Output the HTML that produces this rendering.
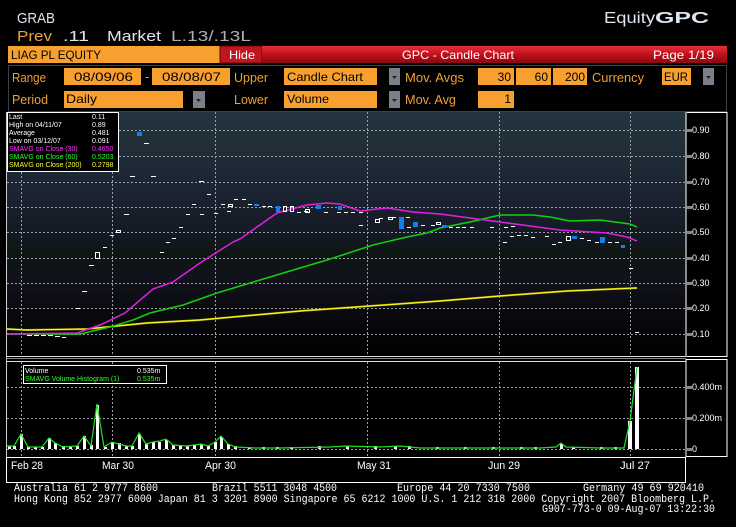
<!DOCTYPE html>
<html><head><meta charset="utf-8"><style>
html,body{margin:0;padding:0;background:#000;}
svg{display:block}
text{font-family:"Liberation Sans",sans-serif;}
.m{font-family:"Liberation Mono",monospace;}
</style></head><body>
<svg width="736" height="527" viewBox="0 0 736 527" xmlns="http://www.w3.org/2000/svg">
<defs>
<linearGradient id="bg" x1="0" y1="0" x2="0" y2="1">
<stop offset="0" stop-color="#24343e"/>
<stop offset="0.2" stop-color="#1f2c36"/>
<stop offset="0.35" stop-color="#1a2230"/>
<stop offset="0.5" stop-color="#141a24"/>
<stop offset="0.58" stop-color="#0e1612"/>
<stop offset="0.68" stop-color="#11121d"/>
<stop offset="0.8" stop-color="#0b0c10"/>
<stop offset="0.9" stop-color="#050507"/>
<stop offset="1" stop-color="#000"/>
</linearGradient>
<linearGradient id="red" x1="0" y1="0" x2="0" y2="1">
<stop offset="0" stop-color="#e8303a"/>
<stop offset="0.5" stop-color="#c0101c"/>
<stop offset="1" stop-color="#8a0810"/>
</linearGradient>
</defs>
<rect width="736" height="527" fill="#000"/>
<!-- header -->
<text x="17" y="23" font-size="15" fill="#dde6f0" textLength="38" lengthAdjust="spacingAndGlyphs">GRAB</text>
<text x="604" y="23" font-size="16" fill="#dde6f0" textLength="51" lengthAdjust="spacingAndGlyphs">Equity</text>
<text x="655" y="23" font-size="16" font-weight="bold" fill="#dde6f0" textLength="54" lengthAdjust="spacingAndGlyphs">GPC</text>
<text x="17" y="41" font-size="15" fill="#e8a040" textLength="35" lengthAdjust="spacingAndGlyphs">Prev</text>
<text x="63" y="41" font-size="15" fill="#dde6f0" textLength="26" lengthAdjust="spacingAndGlyphs">.11</text>
<text x="107" y="41" font-size="15" fill="#dde6f0" textLength="54" lengthAdjust="spacingAndGlyphs">Market</text>
<text x="171" y="41" font-size="15" fill="#aab0b8" textLength="80" lengthAdjust="spacingAndGlyphs">L.13/.13L</text>
<!-- red bar -->
<rect x="8" y="46" width="212" height="17" fill="#f7a030"/>
<text x="11" y="59" font-size="12" fill="#000" textLength="90" lengthAdjust="spacingAndGlyphs">LIAG PL EQUITY</text>
<rect x="220" y="46" width="42" height="17" fill="#c01620" stroke="#600" stroke-width="1"/>
<text x="229" y="59" font-size="12" fill="#fff" textLength="26" lengthAdjust="spacingAndGlyphs">Hide</text>
<rect x="262" y="46" width="465" height="17" fill="url(#red)"/>
<text x="402" y="59" font-size="12" fill="#fff" textLength="112" lengthAdjust="spacingAndGlyphs">GPC - Candle Chart</text>
<text x="653" y="59" font-size="12" fill="#fff" textLength="61" lengthAdjust="spacingAndGlyphs">Page 1/19</text>
<!-- form -->
<rect x="8.5" y="65.5" width="718" height="46" fill="#000" stroke="#3a4048"/>
<g font-size="13" fill="#f0a030">
<text x="12" y="82" textLength="34" lengthAdjust="spacingAndGlyphs">Range</text>
<text x="145" y="81" fill="#f0a030">-</text>
<text x="234" y="82" textLength="34" lengthAdjust="spacingAndGlyphs">Upper</text>
<text x="405" y="82" textLength="59" lengthAdjust="spacingAndGlyphs">Mov. Avgs</text>
<text x="592" y="82" textLength="52" lengthAdjust="spacingAndGlyphs">Currency</text>
<text x="12" y="104" textLength="36" lengthAdjust="spacingAndGlyphs">Period</text>
<text x="234" y="104" textLength="34" lengthAdjust="spacingAndGlyphs">Lower</text>
<text x="405" y="104" textLength="51" lengthAdjust="spacingAndGlyphs">Mov. Avg</text>
</g>
<g fill="#f7a030">
<rect x="64" y="68" width="77" height="17"/><rect x="152" y="68" width="78" height="17"/>
<rect x="284" y="68" width="93" height="17"/>
<rect x="478" y="68" width="36" height="17"/><rect x="516" y="68" width="35" height="17"/><rect x="553" y="68" width="34" height="17"/>
<rect x="662" y="68" width="29" height="17"/>
<rect x="64" y="91" width="119" height="17"/><rect x="284" y="91" width="93" height="17"/><rect x="478" y="91" width="36" height="17"/>
</g>
<g fill="#7a7f88">
<rect x="389" y="68" width="11" height="17"/><rect x="703" y="68" width="11" height="17"/>
<rect x="193" y="91" width="12" height="17"/><rect x="389" y="91" width="11" height="17"/>
</g>
<g fill="#222"><path d="M392 76h5l-2.5 3z"/><path d="M706 76h5l-2.5 3z"/><path d="M196 99h5l-2.5 3z"/><path d="M392 99h5l-2.5 3z"/></g>
<g font-size="12" fill="#000">
<text x="74" y="81" textLength="59" lengthAdjust="spacingAndGlyphs">08/09/06</text>
<text x="162" y="81" textLength="59" lengthAdjust="spacingAndGlyphs">08/08/07</text>
<text x="287" y="81" textLength="76" lengthAdjust="spacingAndGlyphs">Candle Chart</text>
<text x="511" y="81" text-anchor="end">30</text>
<text x="548" y="81" text-anchor="end">60</text>
<text x="585" y="81" text-anchor="end">200</text>
<text x="664" y="81" textLength="24" lengthAdjust="spacingAndGlyphs">EUR</text>
<text x="66" y="103" textLength="31" lengthAdjust="spacingAndGlyphs">Daily</text>
<text x="287" y="103" textLength="42" lengthAdjust="spacingAndGlyphs">Volume</text>
<text x="511" y="103" text-anchor="end">1</text>
</g>
<!-- upper chart -->
<rect x="6" y="112" width="680" height="244" fill="url(#bg)"/>
<line x1="6.5" y1="112" x2="6.5" y2="483" stroke="#ccc"/>
<g stroke="#9aa0a8" stroke-dasharray="2,2" stroke-width="1">
<line x1="7" y1="130.5" x2="686" y2="130.5"/><line x1="7" y1="156.5" x2="686" y2="156.5"/><line x1="7" y1="182.5" x2="686" y2="182.5"/><line x1="7" y1="207.5" x2="686" y2="207.5"/><line x1="7" y1="232.5" x2="686" y2="232.5"/><line x1="7" y1="258.5" x2="686" y2="258.5"/><line x1="7" y1="283.5" x2="686" y2="283.5"/><line x1="7" y1="308.5" x2="686" y2="308.5"/><line x1="7" y1="334.5" x2="686" y2="334.5"/>
<line x1="21.5" y1="112" x2="21.5" y2="356"/><line x1="112.5" y1="112" x2="112.5" y2="356"/><line x1="215.5" y1="112" x2="215.5" y2="356"/><line x1="367.5" y1="112" x2="367.5" y2="356"/><line x1="499.5" y1="112" x2="499.5" y2="356"/><line x1="630.5" y1="112" x2="630.5" y2="356"/>
</g>
<rect x="686" y="112.5" width="41" height="244" fill="#000" stroke="#fff"/>
<line x1="686.5" y1="112" x2="686.5" y2="357" stroke="#888"/>
<g fill="#888"><rect x="686" y="129" width="6" height="3"/><rect x="686" y="155" width="6" height="3"/><rect x="686" y="181" width="6" height="3"/><rect x="686" y="206" width="6" height="3"/><rect x="686" y="231" width="6" height="3"/><rect x="686" y="257" width="6" height="3"/><rect x="686" y="282" width="6" height="3"/><rect x="686" y="307" width="6" height="3"/><rect x="686" y="333" width="6" height="3"/></g>
<g font-size="9" fill="#fff">
<text x="692" y="133">0.90</text><text x="692" y="159">0.80</text><text x="692" y="185">0.70</text><text x="692" y="210">0.60</text><text x="692" y="235">0.50</text><text x="692" y="261">0.40</text><text x="692" y="286">0.30</text><text x="692" y="311">0.20</text><text x="692" y="337">0.10</text>
</g>
<!-- MAs -->
<polyline fill="none" stroke="#b0a000" stroke-width="2" points="7,329 27,330 87,329 147,323 200,320 300,311 440,301 500,296 567,291 637,288"/>
<polyline fill="none" stroke="#ffff20" stroke-width="1" points="7,329 27,330 87,329 147,323 200,320 300,311 440,301 500,296 567,291 637,288"/>
<polyline fill="none" stroke="#10d010" stroke-width="1.5" points="7,334 80,334 110,327 133,320 150,313 183,305 217,293 250,283 300,268 327,260 373,245 407,237 427,233 440,228 470,222 500,215 533,215 550,217 570,221 600,220 630,224 637,227"/>
<polyline fill="none" stroke="#e020e0" stroke-width="1.5" points="7,334 77,333 100,325 125,313 153,289 173,282 200,263 233,242 240,239 257,227 277,213 307,205 327,203 340,204 360,211 387,208 413,212 440,214 500,222 560,230 607,233 627,237 637,241"/>
<!-- candles -->
<g fill="#fff">
<rect x="27" y="335" width="5" height="1"/><rect x="34" y="335" width="5" height="1"/><rect x="41" y="335" width="5" height="1"/><rect x="48" y="335" width="5" height="1"/><rect x="55" y="336" width="5" height="1"/><rect x="62" y="337" width="4" height="1"/>
<rect x="76" y="308" width="4" height="1"/><rect x="82" y="291" width="5" height="1"/><rect x="89" y="265" width="5" height="1"/><rect x="103" y="247" width="4" height="1"/><rect x="110" y="235" width="4" height="1"/>
<rect x="124" y="214" width="5" height="1"/><rect x="130" y="176" width="5" height="1"/><rect x="151" y="176" width="5" height="1"/><rect x="144" y="143" width="5" height="1"/>
<rect x="160" y="252" width="4" height="1"/><rect x="166" y="242" width="4" height="1"/><rect x="172" y="238" width="4" height="1"/><rect x="179" y="227" width="4" height="1"/><rect x="186" y="214" width="4" height="1"/><rect x="192" y="204" width="4" height="1"/><rect x="199" y="181" width="5" height="1"/><rect x="207" y="194" width="4" height="1"/><rect x="200" y="214" width="4" height="1"/><rect x="214" y="213" width="4" height="1"/><rect x="221" y="204" width="4" height="1"/><rect x="227" y="211" width="4" height="1"/><rect x="234" y="199" width="4" height="1"/><rect x="242" y="199" width="4" height="1"/><rect x="248" y="204" width="4" height="1"/><rect x="262" y="206" width="4" height="1"/><rect x="268" y="206" width="4" height="1"/><rect x="297" y="212" width="4" height="1"/><rect x="304" y="211" width="4" height="1"/><rect x="324" y="212" width="4" height="1"/><rect x="337" y="212" width="4" height="1"/><rect x="344" y="212" width="4" height="1"/><rect x="351" y="212" width="4" height="1"/><rect x="359" y="212" width="4" height="1"/>
<rect x="359" y="225" width="4" height="1"/><rect x="379" y="218" width="4" height="1"/><rect x="392" y="217" width="4" height="1"/><rect x="399" y="217" width="4" height="1"/><rect x="406" y="217" width="4" height="1"/><rect x="407" y="227" width="4" height="1"/><rect x="421" y="225" width="4" height="1"/><rect x="431" y="225" width="4" height="1"/><rect x="449" y="227" width="4" height="1"/><rect x="456" y="227" width="4" height="1"/><rect x="462" y="227" width="4" height="1"/><rect x="470" y="227" width="4" height="1"/><rect x="490" y="227" width="4" height="1"/>
<rect x="504" y="227" width="4" height="1"/><rect x="511" y="226" width="4" height="1"/><rect x="503" y="242" width="4" height="1"/><rect x="510" y="236" width="4" height="1"/><rect x="517" y="235" width="4" height="1"/><rect x="524" y="235" width="4" height="1"/><rect x="531" y="237" width="4" height="1"/><rect x="545" y="236" width="4" height="1"/><rect x="552" y="244" width="4" height="1"/><rect x="558" y="242" width="4" height="1"/><rect x="580" y="238" width="4" height="1"/><rect x="587" y="240" width="4" height="1"/><rect x="595" y="242" width="4" height="1"/><rect x="608" y="242" width="4" height="1"/><rect x="615" y="242" width="4" height="1"/><rect x="629" y="268" width="4" height="1"/><rect x="635" y="332" width="4" height="1"/>
</g>
<g fill="none" stroke="#fff" stroke-width="1">
<rect x="95.5" y="252.5" width="4" height="6"/><rect x="116.5" y="230.5" width="4" height="2"/><rect x="228.5" y="204.5" width="4" height="2"/>
<rect x="283.5" y="206.5" width="3" height="5"/><rect x="290.5" y="206.5" width="3" height="5"/><rect x="305.5" y="209.5" width="4" height="3"/>
<rect x="375.5" y="219.5" width="4" height="3"/><rect x="388.5" y="217.5" width="4" height="2"/><rect x="436.5" y="222.5" width="4" height="2"/><rect x="566.5" y="236.5" width="4" height="4"/>
</g>
<g fill="#1080f0">
<rect x="137" y="132" width="5" height="4"/><rect x="254" y="204" width="5" height="2"/><rect x="276" y="206" width="4" height="6"/><rect x="316" y="205" width="5" height="4"/><rect x="338" y="206" width="4" height="4"/><rect x="399" y="217" width="5" height="12"/><rect x="413" y="222" width="5" height="5"/><rect x="442" y="225" width="5" height="2"/><rect x="572" y="236" width="5" height="3"/><rect x="600" y="237" width="5" height="6"/><rect x="621" y="245" width="4" height="3"/>
</g>
<!-- upper legend -->
<rect x="7.5" y="112.5" width="111" height="59" fill="#000" stroke="#fff"/>
<g font-size="7" fill="#fff">
<text x="9" y="119">Last</text><text x="92" y="119">0.11</text>
<text x="9" y="127">High on 04/11/07</text><text x="92" y="127">0.89</text>
<text x="9" y="135">Average</text><text x="92" y="135">0.481</text>
<text x="9" y="143">Low on 03/12/07</text><text x="92" y="143">0.091</text>
<text x="9" y="151" fill="#ff30ff">SMAVG on Close (30)</text><text x="92" y="151" fill="#ff30ff">0.4650</text>
<text x="9" y="159" fill="#30ff30">SMAVG on Close (60)</text><text x="92" y="159" fill="#30ff30">0.5203</text>
<text x="9" y="167" fill="#ffff30">SMAVG on Close (200)</text><text x="92" y="167" fill="#ffff30">0.2798</text>
</g>
<!-- separator -->
<line x1="6" y1="356.5" x2="686" y2="356.5" stroke="#ddd"/>
<line x1="6" y1="358.5" x2="686" y2="358.5" stroke="#888"/>
<line x1="6" y1="361.5" x2="686" y2="361.5" stroke="#ddd"/>
<!-- lower chart -->
<g stroke="#9aa0a8" stroke-dasharray="2,2">
<line x1="7" y1="387.5" x2="686" y2="387.5"/><line x1="7" y1="418.5" x2="686" y2="418.5"/><line x1="7" y1="449.5" x2="686" y2="449.5"/>
<line x1="21.5" y1="362" x2="21.5" y2="457"/><line x1="112.5" y1="362" x2="112.5" y2="457"/><line x1="215.5" y1="362" x2="215.5" y2="457"/><line x1="367.5" y1="362" x2="367.5" y2="457"/><line x1="499.5" y1="362" x2="499.5" y2="457"/><line x1="630.5" y1="362" x2="630.5" y2="457"/>
</g>
<g fill="#fff">
<rect x="8" y="446" width="3" height="3"/><rect x="13" y="446" width="3" height="3"/><rect x="20" y="434" width="3" height="15"/><rect x="27" y="447" width="3" height="2"/><rect x="34" y="447" width="3" height="2"/><rect x="41" y="447" width="3" height="2"/><rect x="48" y="438" width="3" height="11"/><rect x="54" y="443" width="3" height="6"/><rect x="62" y="446" width="3" height="3"/><rect x="69" y="446" width="3" height="3"/><rect x="76" y="446" width="3" height="3"/><rect x="83" y="436" width="3" height="13"/><rect x="90" y="445" width="3" height="4"/><rect x="96" y="405" width="3" height="44"/><rect x="104" y="447" width="3" height="2"/><rect x="111" y="442" width="3" height="7"/><rect x="118" y="443" width="3" height="6"/><rect x="125" y="446" width="3" height="3"/><rect x="131" y="446" width="3" height="3"/><rect x="138" y="434" width="3" height="15"/><rect x="145" y="444" width="3" height="5"/><rect x="152" y="442" width="3" height="7"/><rect x="158" y="442" width="3" height="7"/><rect x="165" y="440" width="3" height="9"/><rect x="172" y="445" width="3" height="4"/><rect x="179" y="446" width="3" height="3"/><rect x="186" y="446" width="3" height="3"/><rect x="193" y="445" width="3" height="4"/><rect x="200" y="444" width="3" height="5"/><rect x="207" y="446" width="3" height="3"/><rect x="214" y="442" width="3" height="7"/><rect x="220" y="437" width="3" height="12"/><rect x="227" y="444" width="3" height="5"/><rect x="234" y="446" width="3" height="3"/>
<rect x="248" y="447" width="3" height="2"/><rect x="262" y="447" width="3" height="2"/><rect x="276" y="447" width="3" height="2"/><rect x="290" y="447" width="3" height="2"/><rect x="318" y="446" width="3" height="3"/><rect x="346" y="446" width="3" height="3"/><rect x="374" y="446" width="3" height="3"/><rect x="394" y="446" width="3" height="3"/><rect x="408" y="446" width="3" height="3"/><rect x="436" y="447" width="3" height="2"/><rect x="464" y="447" width="3" height="2"/><rect x="492" y="447" width="3" height="2"/><rect x="520" y="447" width="3" height="2"/><rect x="534" y="447" width="3" height="2"/><rect x="560" y="444" width="3" height="5"/><rect x="572" y="447" width="3" height="2"/><rect x="600" y="447" width="3" height="2"/><rect x="614" y="447" width="3" height="2"/>
<rect x="628" y="421" width="4" height="28"/><rect x="635" y="367" width="4" height="82"/>
</g>
<polyline fill="none" stroke="#20e020" stroke-width="1.2" points="7,446 14,446 21,434 28,447 42,447 49,438 55,443 63,447 77,446 84,436 91,446 97,404 104,447 112,442 126,446 132,446 139,433 146,444 153,442 160,441 166,439 173,445 187,446 194,445 201,444 208,446 215,442 221,436 228,444 236,447 255,448 280,448 330,447 345,446 380,447 400,446 420,448 480,448 540,448 556,447 561,443 566,447 600,448 624,448 630,421 637,367"/>
<rect x="686" y="359.5" width="41" height="97" fill="#000" stroke="#fff"/>
<g fill="#888"><rect x="686" y="386" width="6" height="3"/><rect x="686" y="417" width="6" height="3"/><rect x="686" y="448" width="6" height="3"/></g>
<g font-size="9" fill="#fff"><text x="692" y="390">0.400m</text><text x="692" y="421">0.200m</text><text x="692" y="452">0</text></g>
<rect x="23.5" y="365.5" width="143" height="18" fill="#000" stroke="#fff"/>
<g font-size="7"><text x="25" y="373" fill="#fff">Volume</text><text x="137" y="373" fill="#fff">0.535m</text>
<text x="25" y="381" fill="#30ff30">SMAVG Volume Histogram (1)</text><text x="137" y="381" fill="#30ff30">0.535m</text></g>
<!-- date box -->
<rect x="6.5" y="457.5" width="679" height="25" fill="none" stroke="#fff"/>
<g font-size="11" fill="#fff">
<text x="11" y="469" textLength="32" lengthAdjust="spacingAndGlyphs">Feb 28</text>
<text x="102" y="469" textLength="32" lengthAdjust="spacingAndGlyphs">Mar 30</text>
<text x="205" y="469" textLength="31" lengthAdjust="spacingAndGlyphs">Apr 30</text>
<text x="357" y="469" textLength="34" lengthAdjust="spacingAndGlyphs">May 31</text>
<text x="488" y="469" textLength="32" lengthAdjust="spacingAndGlyphs">Jun 29</text>
<text x="620" y="469" textLength="30" lengthAdjust="spacingAndGlyphs">Jul 27</text>
</g>
<!-- footer -->
<g class="m" font-size="11" fill="#fff">
<text class="m" x="14" y="491" textLength="144" lengthAdjust="spacingAndGlyphs">Australia 61 2 9777 8600</text>
<text class="m" x="212" y="491" textLength="125" lengthAdjust="spacingAndGlyphs">Brazil 5511 3048 4500</text>
<text class="m" x="397" y="491" textLength="133" lengthAdjust="spacingAndGlyphs">Europe 44 20 7330 7500</text>
<text class="m" x="583" y="491" textLength="121" lengthAdjust="spacingAndGlyphs">Germany 49 69 920410</text>
<text class="m" x="14" y="502" textLength="701" lengthAdjust="spacingAndGlyphs">Hong Kong 852 2977 6000 Japan 81 3 3201 8900 Singapore 65 6212 1000 U.S. 1 212 318 2000 Copyright 2007 Bloomberg L.P.</text>
<text class="m" x="542" y="512" textLength="173" lengthAdjust="spacingAndGlyphs">G907-773-0 09-Aug-07 13:22:30</text>
</g>
</svg>
</body></html>
